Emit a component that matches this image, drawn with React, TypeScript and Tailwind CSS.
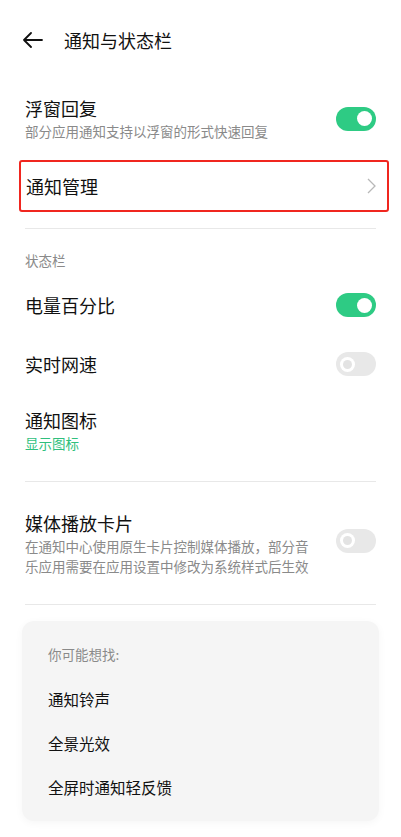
import React from "react";

const font = { fontFamily: '"Noto Sans CJK SC", "Noto Sans", sans-serif' };

function Toggle({ on }: { on: boolean }) {
  if (on) {
    return (
      <div className="w-[40px] h-[24px] rounded-full bg-[#2ecb84] flex items-center justify-end pr-[4px] shrink-0">
        <div className="w-[15px] h-[15px] rounded-full bg-white" />
      </div>
    );
  }
  return (
    <div className="w-[40px] h-[24px] rounded-full bg-[#e8e8e8] flex items-center pl-[4px] shrink-0">
      <div className="w-[15px] h-[15px] rounded-full bg-white flex items-center justify-center">
        <div className="w-[9px] h-[9px] rounded-full bg-[#e3e3e3]" />
      </div>
    </div>
  );
}

function Row({
  title,
  sub,
  subGreen,
  toggle,
}: {
  title: string;
  sub?: string;
  subGreen?: boolean;
  toggle?: boolean;
}) {
  return (
    <div className="flex items-center justify-between px-[25px] py-[12px]">
      <div className="flex flex-col">
        <span className="text-[18px] leading-[24px] text-[#111]">{title}</span>
        {sub && (
          <span
            className={`text-[13.5px] leading-[20px] mt-[1px] ${
              subGreen ? "text-[#2fbf7d]" : "text-[#8a8a8a]"
            }`}
          >
            {sub}
          </span>
        )}
      </div>
      {toggle !== undefined && <Toggle on={toggle} />}
    </div>
  );
}

export default function App() {
  return (
    <main className="w-[401px] h-[837px] bg-white overflow-hidden" style={font}>
      {/* Header */}
      <div className="flex items-center h-[80px] px-[22px]">
        <svg width="22" height="16" viewBox="0 0 22 16" fill="none" stroke="#111" strokeWidth="1.8" strokeLinecap="round" strokeLinejoin="round">
          <path d="M20 8H2M9 1L2 8l7 7" />
        </svg>
        <span className="ml-[20px] text-[18px] text-[#111]">通知与状态栏</span>
      </div>

      <div className="pt-[4px]">
        <Row title="浮窗回复" sub="部分应用通知支持以浮窗的形式快速回复" toggle={true} />
      </div>

      {/* Highlighted row */}
      <div className="ml-[19px] mr-[12px] mt-[7px] h-[52px] border-2 border-[#f0261f] rounded-[3px] flex items-center justify-between pl-[5px] pr-[11px]">
        <span className="text-[18px] text-[#111]">通知管理</span>
        <svg width="9" height="16" viewBox="0 0 9 16" fill="none" stroke="#b8b8b8" strokeWidth="1.3">
          <path d="M1 1l7 7-7 7" />
        </svg>
      </div>

      <div className="mx-[25px] mt-[16px] h-px bg-[#e8e8e8]" />

      <div className="px-[25px] pt-[21px] text-[13.5px] leading-[20px] text-[#8a8a8a]">状态栏</div>

      <div className="pt-[11px]">
        <Row title="电量百分比" toggle={true} />
      </div>
      <div className="pt-[11px]">
        <Row title="实时网速" toggle={false} />
      </div>
      <div className="pt-[8px]">
        <Row title="通知图标" sub="显示图标" subGreen />
      </div>

      <div className="mx-[25px] mt-[16px] h-px bg-[#e8e8e8]" />

      <div className="flex items-center justify-between px-[25px] pt-[29px]">
        <div className="flex flex-col">
          <span className="text-[18px] leading-[24px] text-[#111]">媒体播放卡片</span>
          <span className="text-[13.5px] leading-[20px] text-[#8a8a8a] w-[290px] mt-[1px]">
            在通知中心使用原生卡片控制媒体播放，部分音乐应用需要在应用设置中修改为系统样式后生效
          </span>
        </div>
        <div className="-mt-[6px]">
          <Toggle on={false} />
        </div>
      </div>

      <div className="mx-[25px] mt-[28px] h-px bg-[#e8e8e8]" />

      {/* Suggestions card */}
      <div className="mx-[22px] mt-[16px] rounded-[12px] bg-[#f5f5f5] shadow-[0_2px_8px_rgba(0,0,0,0.04)] pl-[26px] pt-[23px] pb-[23px]">
        <div className="text-[13.5px] leading-[20px] text-[#8a8a8a]">你可能想找:</div>
        <div className="mt-[24px] text-[15.5px] leading-[22px] text-[#111]">通知铃声</div>
        <div className="mt-[22px] text-[15.5px] leading-[22px] text-[#111]">全景光效</div>
        <div className="mt-[22px] text-[15.5px] leading-[22px] text-[#111]">全屏时通知轻反馈</div>
      </div>
    </main>
  );
}
